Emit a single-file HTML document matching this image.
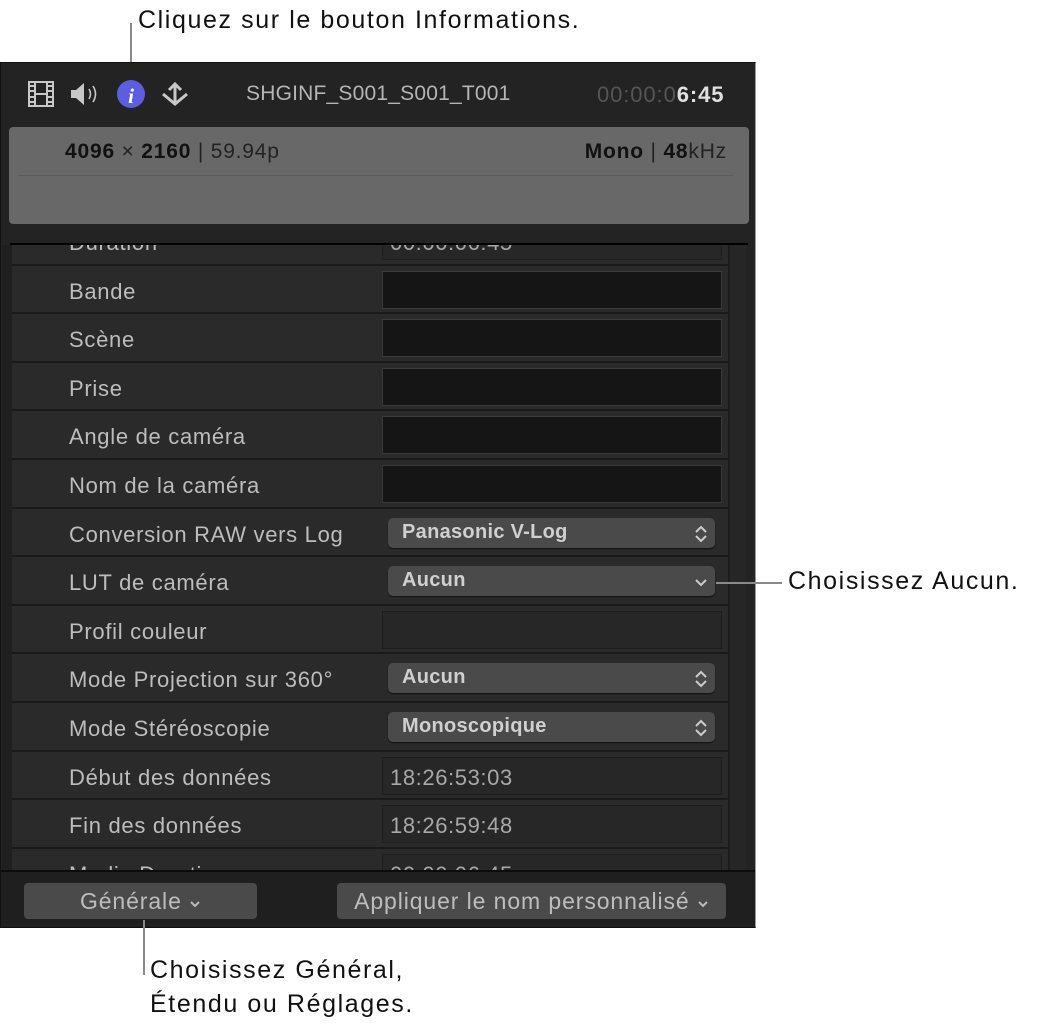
<!DOCTYPE html>
<html><head><meta charset="utf-8"><style>
*{margin:0;padding:0;box-sizing:border-box}
body{width:1048px;height:1027px;background:#fff;position:relative;overflow:hidden;font-family:"Liberation Sans",sans-serif}
.ab{position:absolute}
.call{color:#111;font-size:25px;letter-spacing:1.6px;position:absolute;white-space:nowrap}
.ln{position:absolute;background:#8a8a8a}
#panel{left:0;top:62px;width:756px;height:866px;background:#232323;border:1px solid #111;border-right:1px solid #9a9a9a}
#list{left:12px;top:245px;width:716px;height:626px;overflow:hidden;background:#2a2a2a}
.row{position:absolute;left:0;width:716px;height:48.6px;border-bottom:2px solid #1a1a1a;background:#2a2a2a}
.lab{position:absolute;left:57px;top:13px;color:#bdbdbd;font-size:22px;letter-spacing:0.7px;white-space:nowrap}
.fld{position:absolute;left:370px;top:5px;width:340px;height:38px;background:#151515;border:1px solid #3a3a3a}
.ro{background:#272727;border:1px solid #1e1e1e}
.ro span{position:absolute;left:7px;top:7px;color:#a8a8a8;font-size:22px;letter-spacing:0.6px}
.pop{position:absolute;left:376px;top:9px;width:327px;height:30px;background:#4a4a4a;border-radius:5px;box-shadow:0 1px 1px #111;color:#d0d0d0;font-size:20px;letter-spacing:0.3px;font-weight:bold;padding:3px 0 0 14px}
.pop svg{position:absolute;right:8px;top:7px}
.btn{position:absolute;top:883px;height:36px;background:#4a4a4a;border-radius:4px;color:#bdbdbd;font-size:23px;letter-spacing:0.9px;text-align:center;padding-top:5px;white-space:nowrap}
</style></head><body>
<div class="call" style="left:138px;top:6px">Cliquez sur le bouton Informations.</div>
<div class="ln" style="left:130px;top:23px;width:2px;height:60px"></div>

<div id="panel" class="ab"></div>
<svg class="ab" style="left:27px;top:80px" width="180" height="28" viewBox="0 0 180 28">
 <g fill="none" stroke="#c8c8c8" stroke-width="2"><rect x="2" y="2" width="24" height="24"/><line x1="8" y1="2" x2="8" y2="26"/><line x1="20" y1="2" x2="20" y2="26"/><line x1="8" y1="14" x2="20" y2="14"/></g>
 <g fill="#c8c8c8"><rect x="3" y="5" width="4" height="2"/><rect x="3" y="10" width="4" height="2"/><rect x="3" y="16" width="4" height="2"/><rect x="3" y="21" width="4" height="2"/><rect x="21" y="5" width="4" height="2"/><rect x="21" y="10" width="4" height="2"/><rect x="21" y="16" width="4" height="2"/><rect x="21" y="21" width="4" height="2"/></g>
 <path d="M44 10h5l8-7v22l-8-7h-5z" fill="#c8c8c8"/>
 <path d="M62 9q3 5 0 10M66 6q5 8 0 16" stroke="#c8c8c8" stroke-width="1.6" fill="none"/>
 <circle cx="104" cy="14" r="14" fill="#5a5ee0"/>
 <text x="104" y="23" text-anchor="middle" fill="#fff" font-family="Liberation Serif" font-style="italic" font-weight="bold" font-size="21">i</text>
 <path d="M148 4v20M142 10l6-6 6 6M136 14l12 10 12-10" stroke="#c8c8c8" stroke-width="3" fill="none"/>
</svg>
<div class="ab" style="left:246px;top:82px;color:#b5b5b5;font-size:21px;letter-spacing:0.2px">SHGINF_S001_S001_T001</div>
<div class="ab" style="left:597px;top:82px;color:#555;font-size:22px;letter-spacing:0.9px">00:00:0<span style="color:#e0e0e0;font-weight:bold">6:45</span></div>

<div class="ab" style="left:9px;top:127px;width:740px;height:97px;background:#686868;border-radius:4px"></div>
<div class="ab" style="left:18px;top:175px;width:715px;height:1px;background:#5c5c5c"></div>
<div class="ab" style="left:65px;top:140px;font-size:21px;letter-spacing:0.8px;color:#222;white-space:nowrap"><b style="color:#111">4096</b> × <b style="color:#111">2160</b> | 59.94p</div>
<div class="ab" style="right:321px;top:140px;font-size:21px;letter-spacing:0.8px;color:#222;white-space:nowrap"><b style="color:#111">Mono</b> | <b style="color:#111">48</b>kHz</div>
<div class="ab" style="left:10px;top:243px;width:738px;height:2px;background:#000"></div>

<div class="ab" style="left:728px;top:245px;width:18px;height:626px;background:#262626;border-left:2px solid #1c1c1c"></div>
<div class="ab" style="left:2px;top:245px;width:10px;height:626px;background:#1f1f1f"></div>

<div id="list" class="ab">
 <div class="row" style="top:-28px"><span class="lab">Duration</span><div class="fld ro"><span>00:00:06:45</span></div></div>
 <div class="row" style="top:20.6px"><span class="lab">Bande</span><div class="fld"></div></div>
 <div class="row" style="top:69.2px"><span class="lab">Scène</span><div class="fld"></div></div>
 <div class="row" style="top:117.8px"><span class="lab">Prise</span><div class="fld"></div></div>
 <div class="row" style="top:166.4px"><span class="lab">Angle de caméra</span><div class="fld"></div></div>
 <div class="row" style="top:215px"><span class="lab">Nom de la caméra</span><div class="fld"></div></div>
 <div class="row" style="top:263.6px"><span class="lab">Conversion RAW vers Log</span><div class="pop">Panasonic V-Log<svg width="12" height="18"><path d="M1 7l5-5 5 5M1 11l5 5 5-5" stroke="#ccc" stroke-width="2" fill="none"/></svg></div></div>
 <div class="row" style="top:312.2px"><span class="lab">LUT de caméra</span><div class="pop">Aucun<svg width="12" height="18"><path d="M1 7l5 5 5-5" stroke="#ccc" stroke-width="2" fill="none"/></svg></div></div>
 <div class="row" style="top:360.8px"><span class="lab">Profil couleur</span><div class="fld ro"></div></div>
 <div class="row" style="top:409.4px"><span class="lab">Mode Projection sur 360°</span><div class="pop">Aucun<svg width="12" height="18"><path d="M1 7l5-5 5 5M1 11l5 5 5-5" stroke="#ccc" stroke-width="2" fill="none"/></svg></div></div>
 <div class="row" style="top:458px"><span class="lab">Mode Stéréoscopie</span><div class="pop">Monoscopique<svg width="12" height="18"><path d="M1 7l5-5 5 5M1 11l5 5 5-5" stroke="#ccc" stroke-width="2" fill="none"/></svg></div></div>
 <div class="row" style="top:506.6px"><span class="lab">Début des données</span><div class="fld ro"><span>18:26:53:03</span></div></div>
 <div class="row" style="top:555.2px"><span class="lab">Fin des données</span><div class="fld ro"><span>18:26:59:48</span></div></div>
 <div class="row" style="top:603.8px"><span class="lab">Media Duration</span><div class="fld ro"><span>00:00:06:45</span></div></div>
</div>

<div class="ab" style="left:1px;top:870px;width:754px;height:57px;background:#1f1f1f;border-top:2px solid #0c0c0c"></div>
<div class="btn" style="left:24px;width:233px">Générale <svg width="12" height="10"><path d="M2 3l4 4 4-4" stroke="#bbb" stroke-width="2" fill="none"/></svg></div>
<div class="btn" style="left:337px;width:389px">Appliquer le nom personnalisé <svg width="12" height="10"><path d="M2 3l4 4 4-4" stroke="#bbb" stroke-width="2" fill="none"/></svg></div>

<div class="ab" style="left:0;top:928px;width:1048px;height:99px;background:#fff"></div>
<div class="ln" style="left:143px;top:920px;width:2px;height:55px"></div>
<div class="call" style="left:150px;top:956px">Choisissez Général,</div>
<div class="call" style="left:150px;top:990px">Étendu ou Réglages.</div>
<div class="ln" style="left:716px;top:582px;width:66px;height:2px"></div>
<div class="call" style="left:788px;top:567px">Choisissez Aucun.</div>
</body></html>
